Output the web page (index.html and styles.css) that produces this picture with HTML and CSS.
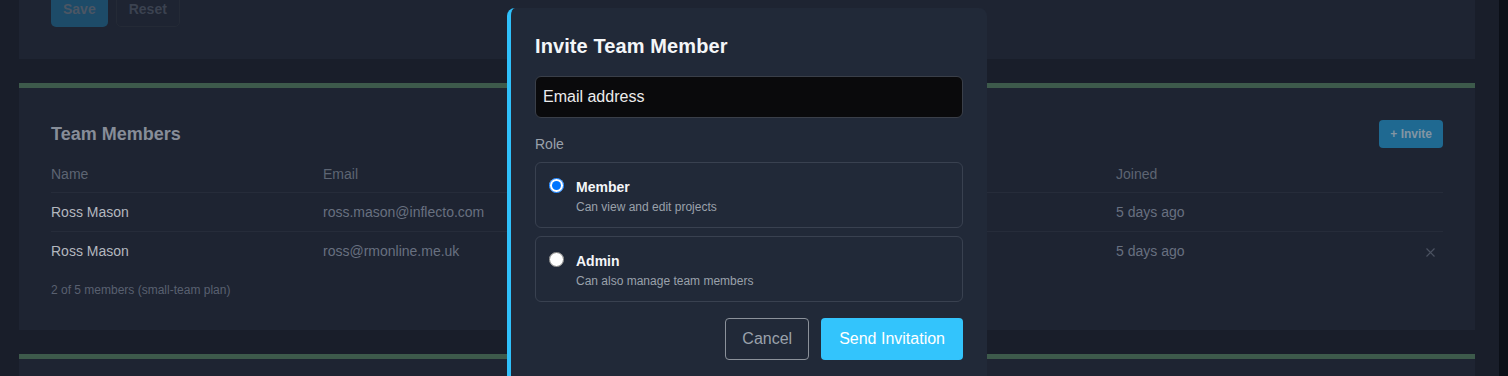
FILE: index.html
```html
<!DOCTYPE html>
<html lang="en">
<head>
    <meta charset="UTF-8">
    <meta name="viewport" content="width=device-width, initial-scale=1.0">
    <title>Team Settings</title>
    <link rel="stylesheet" href="styles.css">
</head>
<body>
    <main class="page">
        <section class="card card-top">
            <div class="form-actions">
                <button class="btn-save">Save</button>
                <button class="btn-reset">Reset</button>
            </div>
        </section>

        <section class="card">
            <div class="card-header">
                <h2>Team Members</h2>
                <button class="btn-invite">+ Invite</button>
            </div>
            <table class="members">
                <colgroup>
                    <col style="width: 272px">
                    <col style="width: 400px">
                    <col style="width: 393px">
                    <col style="width: 295px">
                    <col style="width: 32px">
                </colgroup>
                <thead>
                    <tr>
                        <th>Name</th>
                        <th>Email</th>
                        <th>Role</th>
                        <th>Joined</th>
                        <th></th>
                    </tr>
                </thead>
                <tbody>
                    <tr>
                        <td class="name">Ross Mason</td>
                        <td>ross.mason@inflecto.com</td>
                        <td>Owner</td>
                        <td>5 days ago</td>
                        <td></td>
                    </tr>
                    <tr>
                        <td class="name">Ross Mason</td>
                        <td>ross@rmonline.me.uk</td>
                        <td>Member</td>
                        <td>5 days ago</td>
                        <td class="remove">
                            <svg width="9" height="9" viewBox="0 0 9 9"><path d="M0.5 0.5L8.5 8.5M8.5 0.5L0.5 8.5" stroke="#4b5261" stroke-width="1.2"/></svg>
                        </td>
                    </tr>
                </tbody>
            </table>
            <p class="plan-note">2 of 5 members (small-team plan)</p>
        </section>

        <section class="card card-empty"></section>
    </main>

    <div class="modal">
        <h3>Invite Team Member</h3>
        <input type="email" class="email-input" value="Email address">
        <div class="field-label">Role</div>
        <label class="role-option">
            <input type="radio" name="role" checked>
            <span class="role-text">
                <strong>Member</strong>
                <small>Can view and edit projects</small>
            </span>
        </label>
        <label class="role-option">
            <input type="radio" name="role">
            <span class="role-text">
                <strong>Admin</strong>
                <small>Can also manage team members</small>
            </span>
        </label>
        <div class="modal-actions">
            <button class="btn-cancel">Cancel</button>
            <button class="btn-send">Send Invitation</button>
        </div>
    </div>
</body>
</html>
```

FILE: styles.css
```css
html {
    background-color: #0b0f17;
}

body {
    margin: 0 9px 0 0;
    font-family: "Liberation Sans", Arial, sans-serif;
    background-color: #191e2a;
    color: white;
    height: 376px;
    overflow: hidden;
    position: relative;
}

.page {
    width: 1456px;
    margin-left: 19px;
    margin-top: -14px;
    display: flex;
    flex-direction: column;
    gap: 24px;
}

.card {
    background-color: #1e2432;
    border-top: 5px solid #3d5a4b; /* green accent */
    padding: 32px;
}

.card-top {
    padding-top: 0;
}

.card-empty {
    height: 120px;
}

.form-actions {
    display: flex;
    gap: 8px;
}

.form-actions button {
    height: 36px;
    font-family: inherit;
    font-size: 14px;
    font-weight: bold;
    border-radius: 5px;
    padding: 0 12px;
}

.btn-save {
    background-color: #1d4b68;
    color: #4b5664;
    border: none;
}

.btn-reset {
    background: none;
    border: 1px solid #242a36;
    color: #3b4250;
}

.card-header {
    display: flex;
    justify-content: space-between;
    align-items: center;
    height: 28px;
}

.card-header h2 {
    margin: 0;
    font-size: 18px;
    color: #878d98;
}

.btn-invite {
    height: 28px;
    padding: 0 11px;
    background-color: #1f6991;
    color: #8295a3;
    border: none;
    border-radius: 4px;
    font-family: inherit;
    font-size: 12px;
    font-weight: bold;
}

.members {
    width: 1392px;
    margin-top: 8px;
    border-collapse: collapse;
    table-layout: fixed;
    font-size: 14px;
}

.members th {
    text-align: left;
    font-weight: normal;
    color: #5d6573;
    padding: 8px 0;
    line-height: 20px;
    border-bottom: 1px solid #262c3a;
}

.members td {
    color: #687080;
    padding: 9px 0;
    line-height: 20px;
}

.members tbody tr:first-child td {
    border-bottom: 1px solid #262c3a;
}

.members td.name {
    color: #b3b7bf;
}

.members td.remove {
    text-align: right;
    padding-right: 8px;
}

.members td.remove svg {
    vertical-align: middle;
}

.plan-note {
    margin: 12px 0 0;
    font-size: 12px;
    line-height: 16px;
    color: #596070;
}

.modal {
    position: absolute;
    left: 507px;
    top: 8px;
    width: 428px;
    padding: 24px;
    background-color: #212938;
    border-left: 4px solid #2fc0fb;
    border-radius: 8px 8px 0 0;
}

.modal h3 {
    margin: 0;
    font-size: 20px;
    line-height: 28px;
    color: #f4f6f8;
    letter-spacing: 0.1px;
}

.email-input {
    display: block;
    box-sizing: border-box;
    width: 100%;
    height: 42px;
    margin: 16px 0;
    padding: 0 7px;
    background-color: #0a0a0c;
    border: 1px solid #3a3f49;
    border-radius: 6px;
    color: #ececec;
    font-family: inherit;
    font-size: 16px;
}

.field-label {
    font-size: 14px;
    line-height: 20px;
    color: #9aa1ab;
    margin-bottom: 8px;
}

.role-option {
    display: flex;
    gap: 12px;
    padding: 14px 13px 12px;
    border: 1px solid #394150;
    border-radius: 6px;
    margin-bottom: 8px;
}

.role-option input {
    width: 15px;
    height: 15px;
    margin: 1px 0 0;
}

.role-text {
    display: flex;
    flex-direction: column;
    gap: 2px;
}

.role-text strong {
    font-size: 14px;
    line-height: 20px;
    color: #f4f6f8;
}

.role-text small {
    font-size: 12px;
    line-height: 16px;
    color: #9aa1ab;
}

.modal-actions {
    display: flex;
    justify-content: flex-end;
    gap: 12px;
    margin-top: 16px;
}

.modal-actions button {
    height: 42px;
    border-radius: 4px;
    font-family: inherit;
    font-size: 16px;
}

.btn-cancel {
    background: none;
    border: 1px solid #8b919a;
    color: #9aa1ab;
    padding: 0 16px;
}

.btn-send {
    background-color: #33c4fc;
    border: none;
    color: white;
    padding: 0 18px;
}
```
